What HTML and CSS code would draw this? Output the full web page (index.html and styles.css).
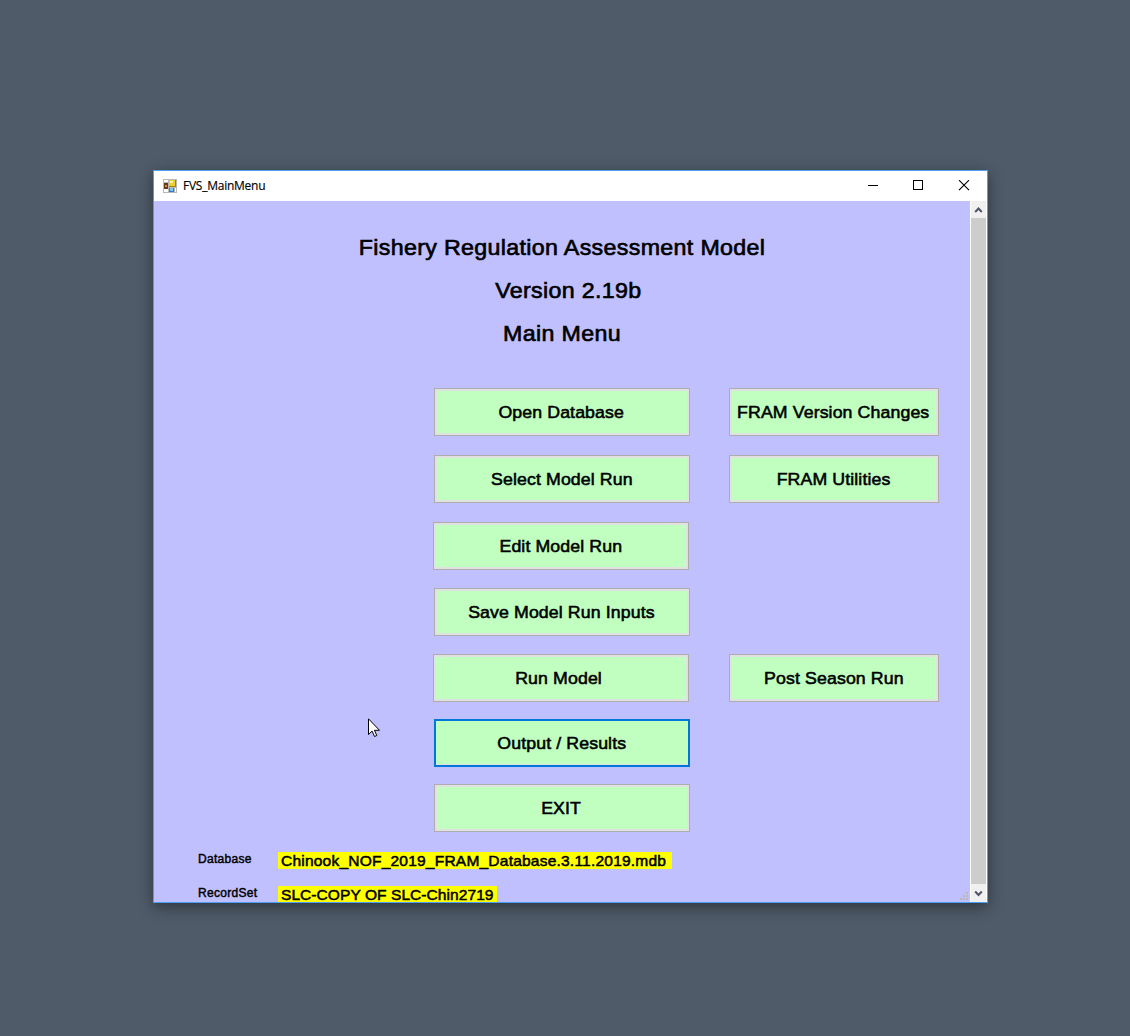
FILE: index.html
```html
<!DOCTYPE html>
<html lang="en">
<head>
<meta charset="utf-8">
<title>FVS_MainMenu</title>
<link rel="stylesheet" href="styles.css">
</head>
<body>
<main class="window">
  <header class="titlebar">
    <svg class="app-icon" width="14" height="14" viewBox="0 0 14 14" shape-rendering="crispEdges">
      <path fill="#fff" stroke="#b9b9b9" d="M.5.5h13v13H.5zM.5 3.5h5M5.500.5v13M5.500 8.500h8M.5 9.500h5M11.500 8.500v5"/>
      <path fill="#6b3a10" d="M1 4h4v6H1z"/><path fill="#c98a52" d="M2 6h2v2H2z"/>
      <path fill="#a8820a" d="M6 1h7v7H6z"/><path fill="#ecd02c" d="M6 1h6v6H6z"/><path fill="#fff7a0" d="M7 2h3v2H7z"/>
      <path fill="#2e7cc4" d="M6 9h5v4H6z"/><path fill="#7cc4f2" d="M7 9h3v3H7z"/>
    </svg>
    <span class="title">FVS_MainMenu</span>
    <svg class="controls" width="102" height="11" viewBox="0 0 102 11" fill="none" stroke="#000">
      <path d="M0 5.500h10M45.500.5h9v9h-9z" shape-rendering="crispEdges"/>
      <path d="M91 .2l10 10M101 .2l-10 10" stroke-width="1.150"/>
    </svg>
  </header>
  <div class="body">
    <section class="form">
      <div class="headings">
        <h1>Fishery Regulation Assessment Model</h1>
        <h1 class="version">Version 2.19b</h1>
        <h1>Main Menu</h1>
      </div>
      <div class="menu">
        <button><span>Open Database</span></button><button><span>FRAM Version Changes</span></button>
        <button><span>Select Model Run</span></button><button><span>FRAM Utilities</span></button>
        <button class="nudge"><span>Edit Model Run</span></button><i></i>
        <button><span>Save Model Run Inputs</span></button><i></i>
        <button class="nudge run"><span>Run Model</span></button><button><span>Post Season Run</span></button>
        <button class="focused"><span>Output / Results</span></button><i></i>
        <button><span>EXIT</span></button>
      </div>
      <div class="info">
        <span class="label">Database</span><div class="value"><span>Chinook_NOF_2019_FRAM_Database.3.11.2019.mdb</span></div>
      </div>
      <div class="info">
        <span class="label">RecordSet</span><div class="value record"><span>SLC-COPY OF SLC-Chin2719</span></div>
      </div>
      <svg class="grip" width="8" height="8" viewBox="0 0 8 8" fill="#b8b8b8" shape-rendering="crispEdges"><path d="M6 0h2v2H6zM3 3h2v2H3zM6 3h2v2H6zM0 6h2v2H0zM3 6h2v2H3zM6 6h2v2H6z"/></svg>
    </section>
    <aside class="scrollbar">
      <svg width="15" height="17" viewBox="0 0 15 17" fill="none" stroke="#505566" stroke-width="2"><path d="M4.200 11l3.300-3.500 3.300 3.500"/></svg>
      <div class="thumb"></div>
      <svg width="15" height="18" viewBox="0 0 15 18" fill="none" stroke="#505566" stroke-width="2"><path d="M4.200 7.500l3.300 3.500 3.300-3.500"/></svg>
    </aside>
  </div>
</main>
<svg class="cursor" width="13" height="20" viewBox="0 0 13 20"><path fill="#fff" stroke="#000" d="M.5.8v15.700l3.600-3.400 2.400 5.400 2.300-1-2.400-5.200h5.100z"/></svg>
</body>
</html>
```
FILE: styles.css
```css
* { box-sizing: border-box; }
body {
  margin: 0;
  height: 1036px;
  padding: 170px 0 0 153px;
  overflow: hidden;
  background: #4f5b69;
  color: #000;
  font-family: "Liberation Sans", Arial, sans-serif;
}
.window {
  width: 835px;
  height: 733px;
  border: 1px solid #4a9ff5;
  background: #fff;
  box-shadow: 0 4px 14px rgba(0, 0, 0, .42);
}
.titlebar {
  height: 30px;
  display: flex;
  align-items: center;
  padding: 0 17px 0 9px;
}
.app-icon { margin-bottom: 1px; }
.title {
  margin: 0 0 2px 6px;
  font: 12px "Open Sans", sans-serif;
  letter-spacing: -.25px;
  -webkit-text-stroke: .15px #000;
}
.controls { margin-left: auto; margin-bottom: 2px; }
.body { display: flex; height: 701px; }
.form {
  position: relative;
  width: 816px;
  padding-top: 25px;
  overflow: hidden;
  background: #c0c0ff;
}
h1 {
  margin: 0;
  font-size: 22px;
  font-weight: 400;
  line-height: 43px;
  letter-spacing: .32px;
  text-align: center;
  transform: scaleX(1.055);
  -webkit-text-stroke: .65px #000;
}
.version { padding-left: 12px; }
.menu {
  display: grid;
  grid-template-columns: 256px 210px;
  grid-template-rows: 67px 67px 66px 66px 65px 65px 48px;
  column-gap: 39px;
  margin: 33px 0 0 280px;
}
button {
  height: 48px;
  padding: 2px 1px 0 0;
  border: 1px solid #adadad;
  background: #c0ffc0;
  box-shadow: inset 0 0 0 2px #e1e1e1;
  color: #000;
  font: 17px "Liberation Sans", Arial, sans-serif;
  letter-spacing: .1px;
  white-space: nowrap;
  -webkit-text-stroke: .55px #000;
}
button span { display: inline-block; transform: scaleX(1.043); }
.nudge { margin: 0 1px 0 -1px; }
.run { padding-right: 5px; }
.focused { border: 2px solid #0078d7; box-shadow: inset 0 -1px #e1e1e1; }
.info { display: flex; height: 34px; padding: 20px 0 0 44px; }
.label {
  width: 80px;
  font-size: 12px;
  line-height: 14px;
  letter-spacing: .3px;
  -webkit-text-stroke: .45px #000;
}
.value {
  height: 17px;
  width: 394px;
  padding-left: 3px;
  background: #ff0;
  font-size: 14.5px;
  line-height: 18px;
  letter-spacing: .2px;
  white-space: nowrap;
  -webkit-text-stroke: .5px #000;
}
.value span { display: inline-block; transform: scaleX(1.07); transform-origin: 0 50%; }
.record { width: 219px; letter-spacing: .06px; }
.grip { position: absolute; right: 2px; bottom: 2px; }
.scrollbar {
  display: flex;
  flex-direction: column;
  width: 15px;
  margin-left: 1px;
  background: #f0f0f0;
}
.scrollbar svg { flex: none; }
.thumb { flex: 1; background: #cdcdcd; }
.cursor { position: absolute; left: 368px; top: 718px; }
```
